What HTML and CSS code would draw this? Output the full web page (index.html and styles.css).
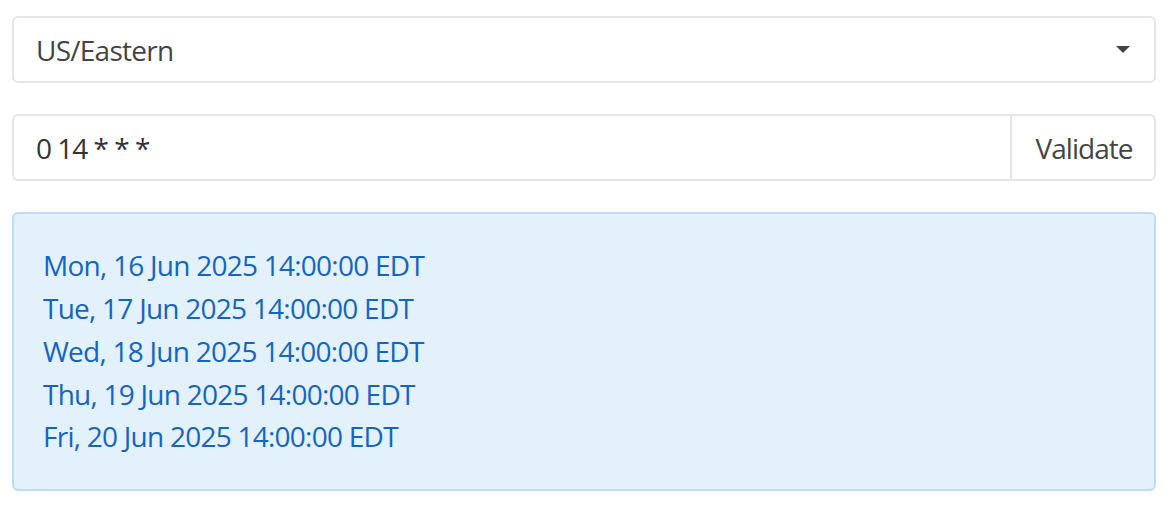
FILE: index.html
```html
<!DOCTYPE html>
<html lang="en">
<head>
    <meta charset="UTF-8">
    <title>Cron schedule</title>
    <link rel="stylesheet" href="styles.css">
</head>
<body>
    <div class="container">
        <div class="select-box">
            <span class="select-value">US/Eastern</span>
            <span class="caret"></span>
        </div>

        <div class="input-group">
            <input type="text" class="cron-input" value="0 14 * * *">
            <button class="validate-btn">Validate</button>
        </div>

        <div class="alert">
            <div>Mon, 16 Jun 2025 14:00:00 EDT</div>
            <div>Tue, 17 Jun 2025 14:00:00 EDT</div>
            <div>Wed, 18 Jun 2025 14:00:00 EDT</div>
            <div>Thu, 19 Jun 2025 14:00:00 EDT</div>
            <div>Fri, 20 Jun 2025 14:00:00 EDT</div>
        </div>
    </div>
</body>
</html>
```

FILE: styles.css
```css
body {
    margin: 0;
    background-color: #fff;
    font-family: "Open Sans", "Noto Sans", sans-serif;
    font-size: 28px;
    letter-spacing: -0.75px;
    color: #444;
}
.container {
    padding: 16px 16px 0 12px;
}
.select-box {
    display: flex;
    align-items: center;
    justify-content: space-between;
    height: 67px;
    box-sizing: border-box;
    padding: 0 24px 0 22px;
    border: 2px solid #e4e6e9;
    border-radius: 6px;
    margin-bottom: 31px;
}
.caret {
    width: 0;
    height: 0;
    border-left: 7.5px solid transparent;
    border-right: 7.5px solid transparent;
    border-top: 7px solid #444;
}
.input-group {
    display: flex;
    height: 67px;
    margin-bottom: 31px;
}
.cron-input {
    flex: 1;
    min-width: 0;
    box-sizing: border-box;
    height: 100%;
    padding: 0 22px;
    border: 2px solid #e4e6e9;
    border-right: none;
    border-radius: 6px 0 0 6px;
    font: inherit;
    letter-spacing: -1px;
    color: #333;
    outline: none;
}
.validate-btn {
    box-sizing: border-box;
    height: 100%;
    width: 146px;
    padding: 0 0 0 2px;
    background-color: #fff;
    border: 2px solid #e4e6e9;
    border-radius: 0 6px 6px 0;
    font: inherit;
    letter-spacing: -1px;
    color: #444;
}
.alert {
    padding: 30px 30px 30px 29px;
    height: 279px;
    box-sizing: border-box;
    background-color: #e3f1fc;
    border: 2px solid #bcdcf7;
    border-radius: 6px;
    color: #1565c0;
    line-height: 42.86px;
}
```
